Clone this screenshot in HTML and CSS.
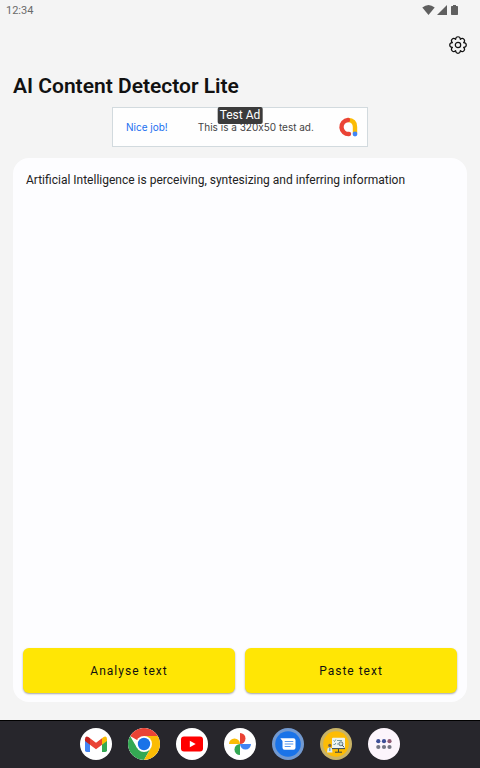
FILE: index.html
```html
<!DOCTYPE html>
<html lang="en">
<head>
    <meta charset="UTF-8">
    <meta name="viewport" content="width=device-width, initial-scale=1.0">
    <title>AI Content Detector Lite</title>
    <link rel="stylesheet" href="styles.css">
</head>
<body>
    <div class="status-bar">
        <span>12:34</span>
        <div class="status-icons">
            <svg width="13" height="10" viewBox="0 0 13 10"><path d="M0.3 2.6Q6.5-2.4 12.7 2.6L6.5 10z"/></svg>
            <svg width="10" height="10" viewBox="0 0 10 10"><path d="M10 0V10H0z"/></svg>
            <svg width="7" height="10" viewBox="0 0 7 10"><path d="M2 0h3v1h1.3q.7 0 .7.7v7.6q0 .7-.7.7H.7Q0 10 0 9.3V1.7Q0 1 .7 1H2z"/></svg>
        </div>
    </div>

    <main class="page">
        <div class="toolbar">
            <button class="settings-btn" type="button" aria-label="Settings">
                <svg width="18" height="18" viewBox="0 0 18 18" fill="none" stroke="#111" stroke-width="1.2" stroke-linejoin="round" stroke-linecap="round">
                    <path id="tooth" d="M6.6 3.2C6.9-.1 11.1-.1 11.4 3.2"/>
                    <use href="#tooth" transform="rotate(45 9 9)"/>
                    <use href="#tooth" transform="rotate(90 9 9)"/>
                    <use href="#tooth" transform="rotate(135 9 9)"/>
                    <use href="#tooth" transform="rotate(180 9 9)"/>
                    <use href="#tooth" transform="rotate(225 9 9)"/>
                    <use href="#tooth" transform="rotate(270 9 9)"/>
                    <use href="#tooth" transform="rotate(315 9 9)"/>
                    <circle cx="9" cy="9" r="2.7"/>
                </svg>
            </button>
        </div>

        <h1 class="title">AI Content Detector Lite</h1>

        <div class="ad">
            <span class="ad-label">Test Ad</span>
            <span class="ad-lead">Nice job!</span>
            <span class="ad-text">This is a 320x50 test ad.</span>
            <svg class="ad-logo" width="20" height="20" viewBox="0 0 20 20" fill="none" stroke-width="4.4">
                <path d="M10 3Q17 3.2 17 10V16" stroke="#fbbc04"/>
                <path d="M10 3A7 7 0 1 0 11 17" stroke="#ea4335" stroke-linecap="round"/>
                <circle cx="17" cy="17" r="2.4" fill="#4285f4"/>
            </svg>
        </div>

        <section class="card">
            <textarea class="input-text" aria-label="Text to analyse" spellcheck="false">Artificial Intelligence is perceiving, syntesizing and inferring information</textarea>
            <div class="actions">
                <button class="btn" type="button">Analyse text</button>
                <button class="btn" type="button">Paste text</button>
            </div>
        </section>
    </main>

    <nav class="dock">
        <button class="app" type="button" aria-label="Gmail">
            <svg viewBox="0 0 32 32">
                <path d="M5 11.5L10 15V24H6.8Q5 24 5 22.2z" fill="#4285f4"/>
                <path d="M27 11.5L22 15V24h3.2Q27 24 27 22.2z" fill="#34a853"/>
                <path d="M22 10.2l1.2-1Q27 7 27 11.3V13l-5 3.7z" fill="#fbbc04"/>
                <path d="M10 10.2l6 4.5 6-4.5v6.5l-6 4.5-6-4.5z" fill="#ea4335"/>
                <path d="M10 10.2l-1.2-1Q5 7 5 11.3V13l5 3.7z" fill="#c5221f"/>
            </svg>
        </button>
        <button class="app" type="button" aria-label="Chrome">
            <svg viewBox="0 0 32 32">
                <path d="M16 16L2.1 8A16 16 0 0 1 29.9 8H16z" fill="#ea4335"/>
                <path d="M2.1 8A16 16 0 0 0 16 32L22.9 20L16 16L9.1 20z" fill="#34a853"/>
                <path d="M16 8H29.9A16 16 0 0 1 16 32L22.9 20z" fill="#fbbc04"/>
                <circle cx="16" cy="16" r="8" fill="#fff"/>
                <circle cx="16" cy="16" r="6.2" fill="#1a73e8"/>
            </svg>
        </button>
        <button class="app" type="button" aria-label="YouTube">
            <svg viewBox="0 0 32 32">
                <rect x="5" y="8.5" width="22" height="15" rx="3" fill="#f00"/>
                <path d="M13.8 12.8L19.7 16l-5.9 3.2z" fill="#fff"/>
            </svg>
        </button>
        <button class="app" type="button" aria-label="Photos">
            <svg viewBox="0 0 32 32">
                <path d="M16 5A5.5 5.5 0 0 1 16 16z" fill="#ea4335"/>
                <path d="M27 16A5.5 5.5 0 0 1 16 16z" fill="#4285f4"/>
                <path d="M16 27A5.5 5.5 0 0 1 16 16z" fill="#34a853"/>
                <path d="M5 16A5.5 5.5 0 0 1 16 16z" fill="#fbbc04"/>
            </svg>
        </button>
        <button class="app app-messages" type="button" aria-label="Messages">
            <svg viewBox="0 0 32 32">
                <circle cx="16" cy="16" r="12.8" fill="#1a73e8"/>
                <path d="M8.3 10.2H21.5Q23.5 10.2 23.5 12.2V19.8Q23.5 21.8 21.5 21.8H12.5Q10.5 21.8 10.5 19.8V13z" fill="#fff"/>
                <path d="M12.7 13.5h8.6M12.7 16h8.6M12.7 18.5h6" stroke="#5a98ee" stroke-width="1.2"/>
            </svg>
        </button>
        <button class="app app-detector" type="button" aria-label="AI Content Detector Lite">
            <svg viewBox="0 0 32 32">
                <circle cx="16" cy="16" r="12.8" fill="#fdbc05"/>
                <rect x="12" y="9.8" width="13" height="11.2" rx="1" fill="#eef4f2"/>
                <path d="M12 20.6h13M18.5 21v3M15 24.2h7" stroke="#34464a" stroke-width="1"/>
                <path d="M13.5 12.5l1 1 1.3-2M17 12.5h5M13.5 16l1 1 1.3-2M17 16h1.5" stroke="#53868d" stroke-width=".8" fill="none"/>
                <circle cx="20.9" cy="15.8" r="2" fill="#c8dde3" stroke="#4b5c64" stroke-width=".8"/>
                <path d="M22.3 17.2l1.8 2.2" stroke="#39474d" stroke-width="1"/>
                <circle cx="9.8" cy="17.4" r="1.6" fill="#75604e"/>
                <path d="M7 24.5l.5-4Q9.8 18.3 12 20.5l.5 4z" fill="#dcecf8"/>
                <path d="M9.8 19.5v3.5" stroke="#4d94cc" stroke-width="1.1"/>
            </svg>
        </button>
        <button class="app app-all" type="button" aria-label="All apps">
            <svg viewBox="0 0 32 32">
                <g fill="#3d4f97">
                    <circle cx="10.3" cy="13.2" r="2.1"/>
                    <circle cx="16" cy="13.2" r="2.1"/>
                    <circle cx="21.5" cy="13.2" r="2.1" fill="#8e5973"/>
                </g>
                <g fill="#737583">
                    <circle cx="10.3" cy="19" r="2.1"/>
                    <circle cx="16" cy="19" r="2.1"/>
                    <circle cx="21.5" cy="19" r="2.1"/>
                </g>
            </svg>
        </button>
    </nav>
</body>
</html>
```

FILE: styles.css
```css
* {
    margin: 0;
    padding: 0;
    box-sizing: border-box;
}

body {
    font-family: Roboto, sans-serif;
    background-color: #f4f4f4;
    color: #111;
    min-height: 100vh;
    display: flex;
    flex-direction: column;
}

button {
    font: inherit;
    color: inherit;
    border: none;
    background: none;
    cursor: pointer;
}

svg {
    display: block;
}

.status-bar {
    height: 20px;
    padding: 0 22px 0 6px;
    display: flex;
    align-items: center;
    justify-content: space-between;
    font-size: 11px;
    color: #6a6a6a;
}

.status-icons {
    display: flex;
    gap: 2px;
    fill: #5f5f5f;
}

.status-icons svg:last-child {
    margin-left: 2px;
}

.page {
    flex: 1;
    display: flex;
    flex-direction: column;
    padding: 0 13px 18px;
}

.toolbar {
    height: 50px;
    display: flex;
    align-items: center;
    justify-content: flex-end;
}

.settings-btn {
    margin-right: -4px;
    padding: 4px;
}

.title {
    font-size: 21px;
    font-weight: 600;
    line-height: 32px;
}

.ad {
    position: relative;
    align-self: center;
    width: 256px;
    height: 40px;
    margin: 5px 0 11px;
    padding: 0 9px 0 13px;
    display: flex;
    align-items: center;
    justify-content: space-between;
    background-color: #fefefe;
    border: 1px solid #d2dade;
    font-family: Inter, sans-serif;
    font-size: 10px;
    /* keep the x in 320x50 a plain letter */
    font-variant-ligatures: no-contextual;
}

.ad-lead {
    color: #1a6ff0;
}

.ad-text {
    margin-left: 6px;
    color: #444;
}

.ad-label {
    position: absolute;
    top: -1px;
    left: 50%;
    transform: translateX(-50%);
    padding: 0 2px;
    border-radius: 2px;
    background-color: #3b3b3b;
    color: #fff;
    font-family: Roboto, sans-serif;
    font-size: 12px;
    line-height: 17px;
    white-space: nowrap;
}

.card {
    flex: 1;
    display: flex;
    flex-direction: column;
    padding: 10px 10px 9px;
    background-color: #fdfdff;
    border-radius: 16px;
}

.input-text {
    flex: 1;
    padding: 4px 3px;
    border: none;
    outline: none;
    resize: none;
    background: none;
    color: #222;
    font-family: inherit;
    font-size: 12px;
    line-height: 16px;
}

.actions {
    display: flex;
    gap: 10px;
}

.btn {
    flex: 1;
    height: 45px;
    border-radius: 6px;
    background-color: #ffe605;
    box-shadow: 0 1px 2px rgba(0, 0, 0, 0.35);
    font-size: 12px;
    letter-spacing: 1px;
}

.dock {
    height: 48px;
    display: flex;
    align-items: center;
    justify-content: center;
    gap: 16px;
    background-color: #27262c;
    box-shadow: inset 0 1px #000;
}

.app {
    width: 32px;
    height: 32px;
    border-radius: 50%;
    background-color: #fff;
    overflow: hidden;
}

.app-messages {
    background-color: #7299d0;
}

.app-detector {
    background-color: #c9b366;
}

.app-all {
    background-color: #fcf5fc;
}
```
